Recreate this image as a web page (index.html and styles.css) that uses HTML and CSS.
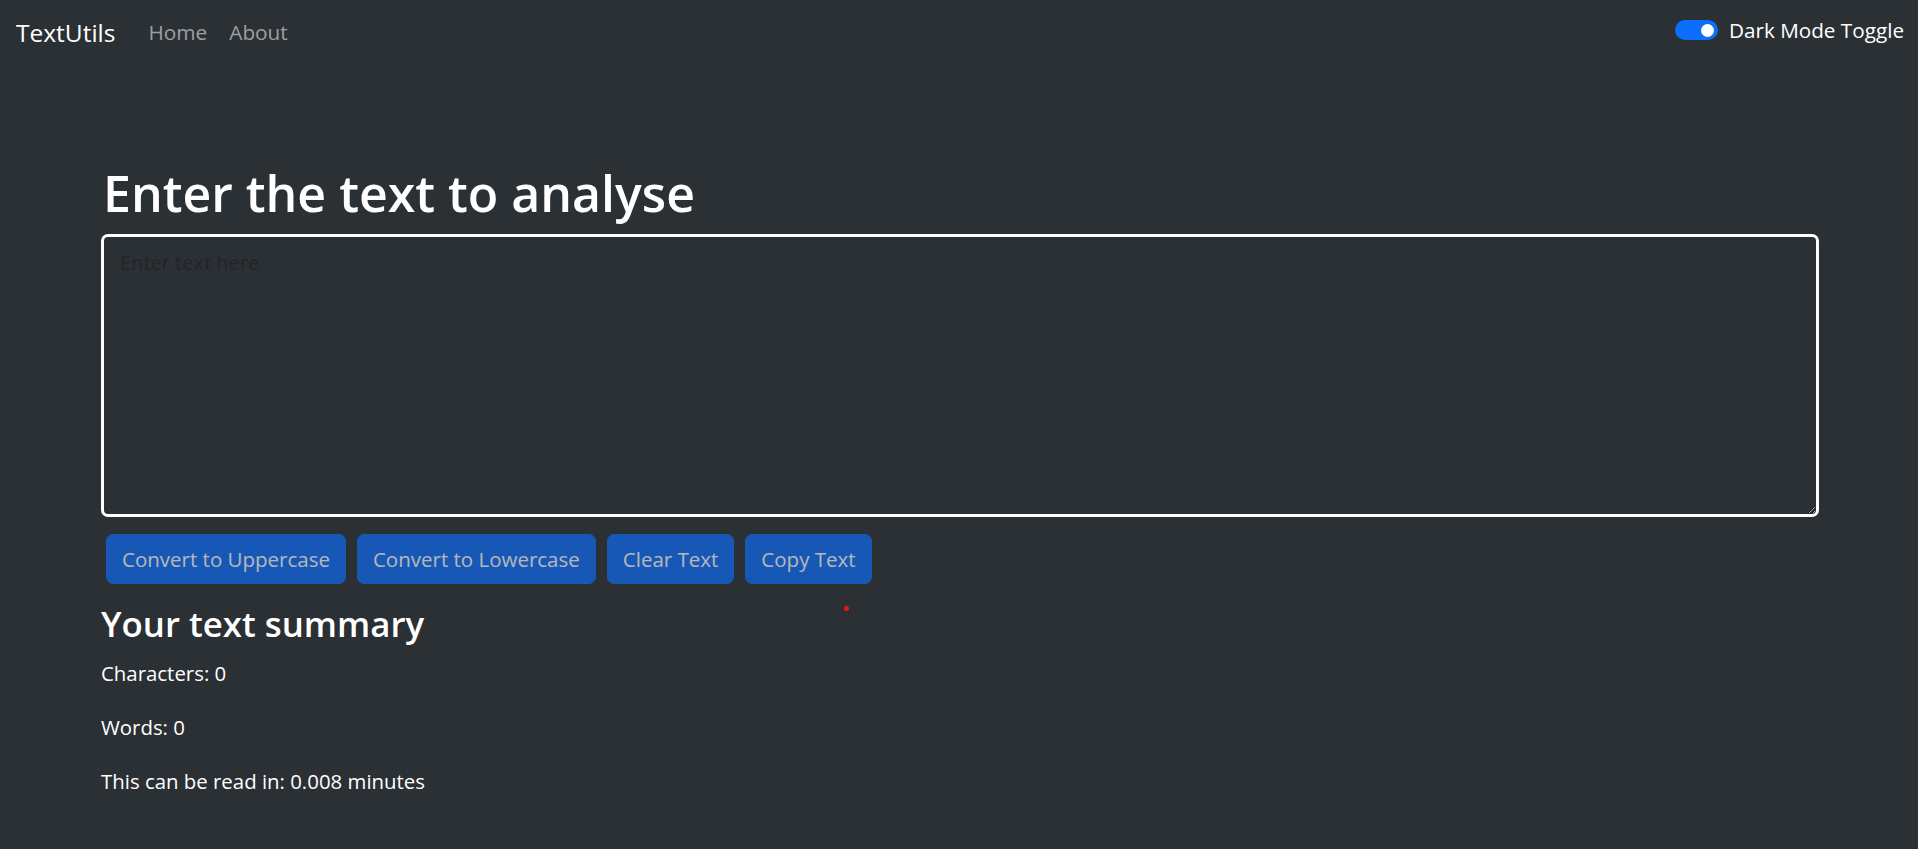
FILE: index.html
```html
<!DOCTYPE html>
<html lang="en">
<head>
<meta charset="utf-8">
<title>TextUtils</title>
<link rel="stylesheet" href="styles.css">
</head>
<body>
<nav class="navbar">
  <a class="brand" href="#">TextUtils</a>
  <ul class="nav-links">
    <li><a href="#">Home</a></li>
    <li><a href="#">About</a></li>
  </ul>
  <label class="switch">
    <span class="switch-track"><span class="switch-knob"></span></span>
    <span class="switch-label">Dark Mode Toggle</span>
  </label>
</nav>
<main class="container">
  <h1 class="title">Enter the text to analyse</h1>
  <textarea class="text-input" placeholder="Enter text here"></textarea>
  <div class="actions">
    <button class="btn" disabled>Convert to Uppercase</button>
    <button class="btn" disabled>Convert to Lowercase</button>
    <button class="btn" disabled>Clear Text</button>
    <button class="btn" disabled>Copy Text</button>
  </div>
  <section class="summary">
    <h2 class="summary-title">Your text summary</h2>
    <p>Characters: 0</p>
    <p>Words: 0</p>
    <p>This can be read in: 0.008 minutes</p>
  </section>
</main>
<span class="cursor-dot"></span>
</body>
</html>
```
FILE: styles.css
```css
* { box-sizing: border-box; }
html, body { margin: 0; padding: 0; }
body {
  background: #2b3035;
  color: #ffffff;
  font-family: "Open Sans", "Noto Sans", sans-serif;
  min-height: 849px;
}
.navbar {
  display: flex;
  align-items: center;
  height: 64px;
  padding: 0 14px 0 16px;
}
.brand {
  color: #fff;
  text-decoration: none;
  font-size: 24.5px;
  margin-right: 33px;
}
.nav-links {
  display: flex;
  gap: 22px;
  list-style: none;
  margin: 0;
  padding: 0;
  font-size: 20.8px;
}
.nav-links a {
  color: rgba(255,255,255,0.55);
  text-decoration: none;
}
.switch {
  margin-left: auto;
  display: flex;
  align-items: center;
  gap: 11px;
  font-size: 20.7px;
  margin-top: -4px;
}
.switch-track {
  width: 43px;
  height: 20px;
  border-radius: 10px;
  background: #0d6efd;
  display: flex;
  align-items: center;
  justify-content: flex-end;
  padding-right: 4px;
}
.switch-knob {
  width: 13px;
  height: 13px;
  border-radius: 50%;
  background: #fff;
}
.container {
  padding: 0 99px 0 101px;
}
.title {
  font-size: 50px;
  font-weight: 600;
  line-height: 1.2;
  margin: 99px 0 11px 2px;
}
.text-input {
  display: block;
  width: 100%;
  height: 283px;
  background: #2b3035;
  border: 3px solid #fff;
  border-radius: 7px;
  color: #fff;
  font-family: inherit;
  font-size: 20px;
  padding: 12px 16px;
  margin: 0;
}
.text-input::placeholder { color: #212529; }
.actions {
  display: flex;
  gap: 11px;
  padding: 0 5px;
  margin-top: 17px;
}
.btn {
  background: #0d6efd;
  color: #fff;
  opacity: .65;
  border: 1px solid #0d6efd;
  border-radius: 7px;
  font-family: inherit;
  font-size: 20.5px;
  height: 50px;
  padding: 0 15px;
}
.summary { margin-top: 19px; }
.summary-title {
  font-size: 34.8px;
  font-weight: 600;
  margin: 0 0 12px 0;
  line-height: 1.2;
}
.summary p {
  font-size: 20.4px;
  margin: 0 0 22px 0;
  line-height: 32px;
}
.cursor-dot {
  position: absolute;
  left: 844px;
  top: 606px;
  width: 5px;
  height: 5px;
  border-radius: 50%;
  background: #e01b1b;
}
```
